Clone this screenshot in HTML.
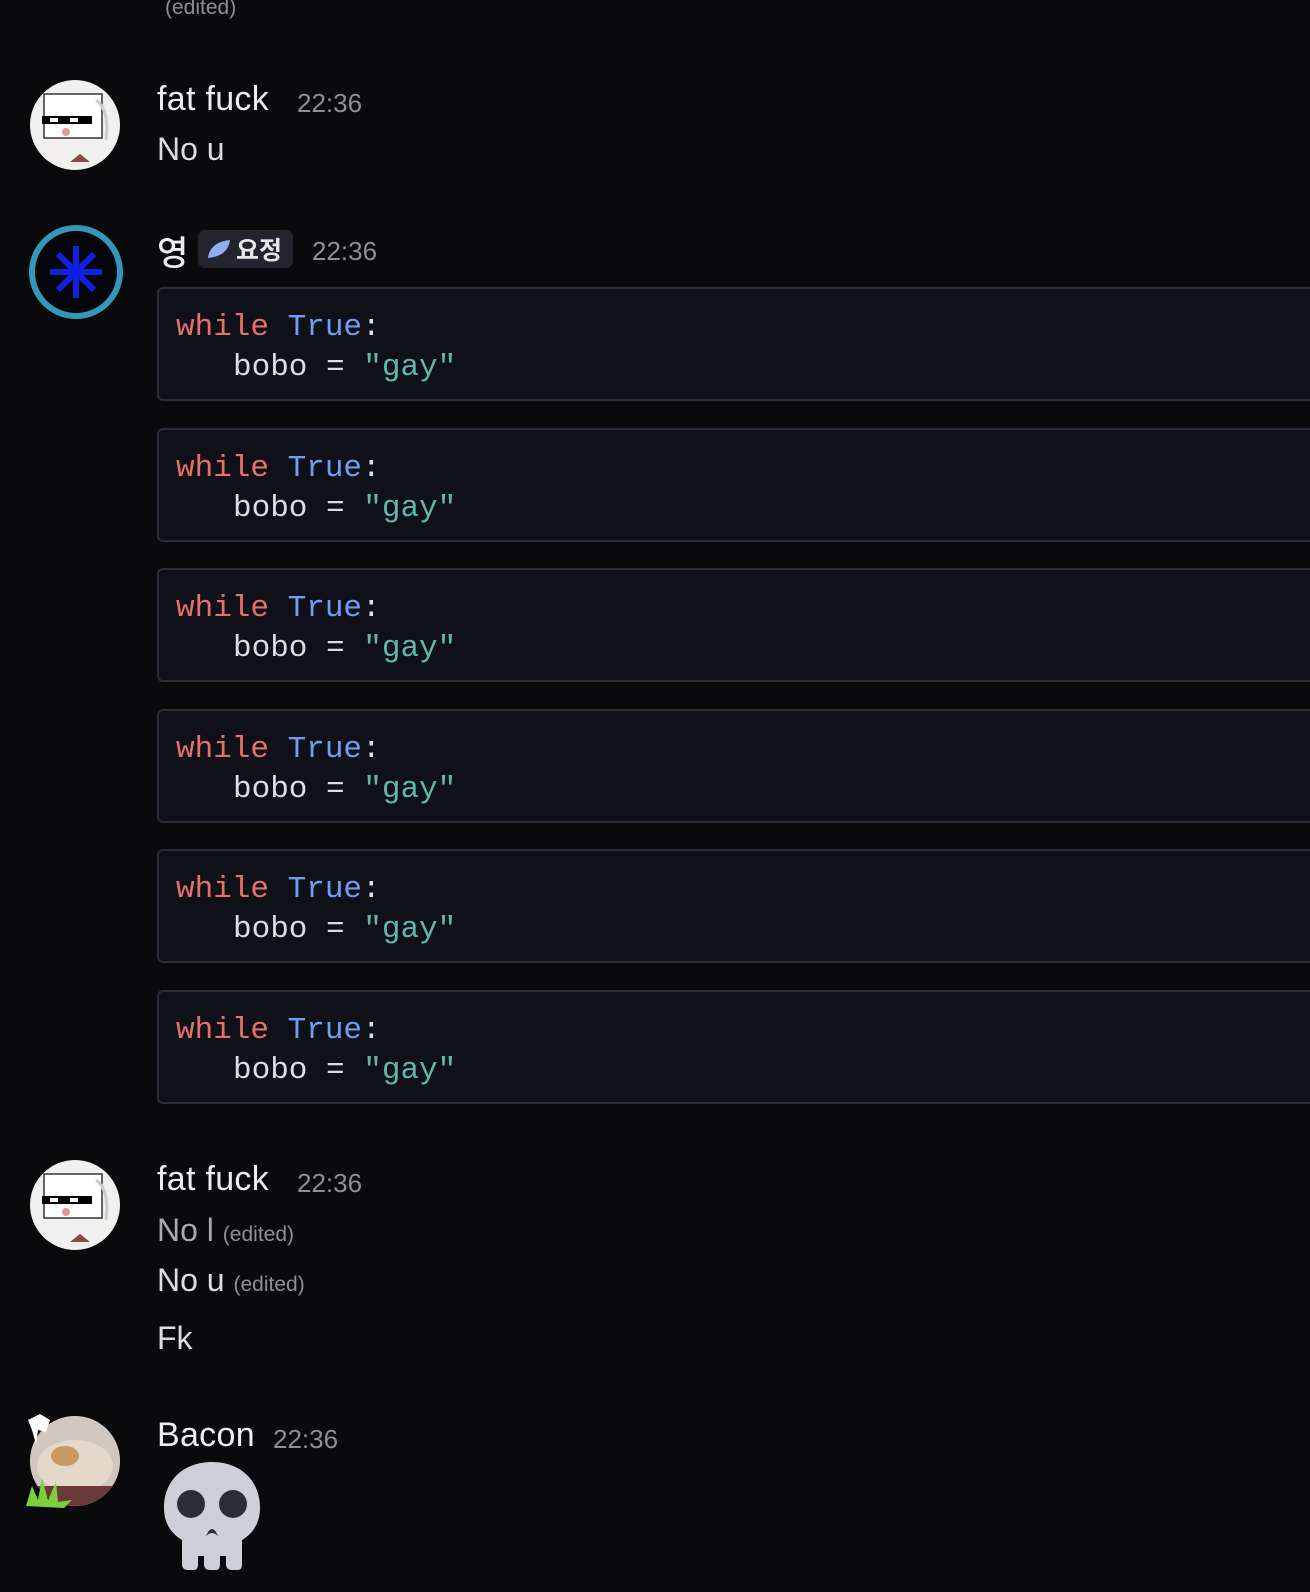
<!DOCTYPE html>
<html><head><meta charset="utf-8"><style>
body{margin:0;width:1310px;height:1592px;background:#0a0a0d;overflow:hidden;position:relative;font-family:"Liberation Sans","Noto Sans CJK KR",sans-serif;color:#dcdde0}
.a{position:absolute;white-space:nowrap}
.name{font-size:34px;color:#eeeef0;font-weight:500;letter-spacing:0.3px}
.ts{font-size:26px;color:#8e8f96}
.msg{font-size:32px;color:#dcdde0}
.ed{font-size:21px;color:#8e8f96}
.code{position:absolute;left:157px;width:1170px;height:114px;background:#0f1018;border:2px solid #2b2c35;border-radius:6px;box-sizing:border-box;font-family:"Liberation Mono",monospace;font-size:31px;color:#dcdde0}
.code .l1{position:absolute;left:17px;top:21px}
.code .l2{position:absolute;left:74px;top:61px}
.k{color:#e8706a}.t{color:#6f9ef0}.s{color:#5fb7ad}
.av{position:absolute;border-radius:50%;overflow:hidden}
</style></head><body>
<div class="a ed" style="left:165px;top:-4px">(edited)</div>

<div class="av" style="left:30px;top:80px;width:90px;height:90px;background:#f2f0ee">
<svg width="90" height="90"><rect x="14" y="14" width="58" height="44" fill="#fff" stroke="#333" stroke-width="1.5"/><rect x="12" y="36" width="50" height="8" fill="#000"/><rect x="20" y="38" width="8" height="4" fill="#fff"/><rect x="40" y="38" width="8" height="4" fill="#fff"/><circle cx="36" cy="52" r="4" fill="#d99"/><path d="M40 82 l10 -8 10 8z" fill="#8a4a48"/><path d="M66 20 q14 10 10 40" stroke="#ccc" fill="none" stroke-width="3"/></svg></div>
<div class="a name" style="left:157px;top:80px">fat fuck</div>
<div class="a ts" style="left:297px;top:88px">22:36</div>
<div class="a msg" style="left:157px;top:131px">No u</div>

<div class="av" style="left:24px;top:220px;width:104px;height:104px;border-radius:50%">
<svg width="104" height="104"><circle cx="52" cy="52" r="44" fill="none" stroke="#3ab0d8" stroke-width="6" opacity=".85"/><circle cx="52" cy="52" r="38" fill="#06060a"/><g stroke="#1020e0" stroke-width="6"><path d="M52 26v52M26 52h52M34 34l36 36M70 34l-36 36"/></g></svg></div>
<div class="a name" style="left:157px;top:226px">영</div>
<div class="a" style="left:198px;top:230px;width:95px;height:38px;background:#24252c;border-radius:7px"></div>
<svg class="a" style="left:206px;top:238px" width="26" height="22"><path d="M2 20 Q4 4 24 2 Q22 18 2 20z" fill="#8fb0f0"/></svg>
<div class="a" style="left:236px;top:231px;font-size:25px;font-weight:bold;color:#e8e8ea">요정</div>
<div class="a ts" style="left:312px;top:236px">22:36</div>

<div class="code" style="top:287px"><div class="l1"><span class="k">while</span> <span class="t">True</span>:</div><div class="l2">bobo = <span class="s">"gay"</span></div></div>
<div class="code" style="top:428px"><div class="l1"><span class="k">while</span> <span class="t">True</span>:</div><div class="l2">bobo = <span class="s">"gay"</span></div></div>
<div class="code" style="top:568px"><div class="l1"><span class="k">while</span> <span class="t">True</span>:</div><div class="l2">bobo = <span class="s">"gay"</span></div></div>
<div class="code" style="top:709px"><div class="l1"><span class="k">while</span> <span class="t">True</span>:</div><div class="l2">bobo = <span class="s">"gay"</span></div></div>
<div class="code" style="top:849px"><div class="l1"><span class="k">while</span> <span class="t">True</span>:</div><div class="l2">bobo = <span class="s">"gay"</span></div></div>
<div class="code" style="top:990px"><div class="l1"><span class="k">while</span> <span class="t">True</span>:</div><div class="l2">bobo = <span class="s">"gay"</span></div></div>

<div class="av" style="left:30px;top:1160px;width:90px;height:90px;background:#f2f0ee">
<svg width="90" height="90"><rect x="14" y="14" width="58" height="44" fill="#fff" stroke="#333" stroke-width="1.5"/><rect x="12" y="36" width="50" height="8" fill="#000"/><rect x="20" y="38" width="8" height="4" fill="#fff"/><rect x="40" y="38" width="8" height="4" fill="#fff"/><circle cx="36" cy="52" r="4" fill="#d99"/><path d="M40 82 l10 -8 10 8z" fill="#8a4a48"/><path d="M66 20 q14 10 10 40" stroke="#ccc" fill="none" stroke-width="3"/></svg></div>
<div class="a name" style="left:157px;top:1160px">fat fuck</div>
<div class="a ts" style="left:297px;top:1168px">22:36</div>
<div class="a msg" style="left:157px;top:1212px;color:#a9aab0">No l <span class="ed">(edited)</span></div>
<div class="a msg" style="left:157px;top:1262px">No u <span class="ed">(edited)</span></div>
<div class="a msg" style="left:157px;top:1320px">Fk</div>

<div class="av" style="left:30px;top:1416px;width:90px;height:90px;background:#b89a7a">
<svg width="90" height="90"><rect width="90" height="90" fill="#cfc7c0"/><ellipse cx="45" cy="50" rx="38" ry="26" fill="#e4d8cc"/><ellipse cx="35" cy="40" rx="14" ry="10" fill="#c89a60"/><rect y="70" width="90" height="20" fill="#6a3a3a"/></svg></div>
<svg class="a" style="left:24px;top:1470px" width="50" height="40"><path d="M2 36 L8 16 L14 30 L18 8 L24 30 L32 12 L34 32 L48 30 L40 38z" fill="#7ccf3a"/></svg>
<svg class="a" style="left:24px;top:1410px" width="30" height="36"><path d="M4 10 L16 4 L26 10 L22 22 L14 20 L12 34 L8 20z" fill="#fff"/></svg>
<div class="a name" style="left:157px;top:1416px">Bacon</div>
<div class="a ts" style="left:273px;top:1424px">22:36</div>
<svg class="a" style="left:162px;top:1460px" width="100" height="112" viewBox="0 0 100 112">
<path d="M50 2 C22 2 2 20 2 48 C2 64 10 74 20 80 L20 104 Q20 110 26 110 L32 110 Q36 110 36 104 L36 96 L42 96 L42 104 Q42 110 48 110 L54 110 Q58 110 58 104 L58 96 L64 96 L64 104 Q64 110 70 110 L76 110 Q80 110 80 104 L80 80 C90 74 98 64 98 48 C98 20 78 2 50 2z" fill="#ccd0d6"/>
<circle cx="29" cy="44" r="14" fill="#2a2d32"/><circle cx="71" cy="44" r="14" fill="#2a2d32"/>
<path d="M44 76 Q50 62 56 76 Q50 70 44 76z" fill="#2a2d32"/></svg>
</body></html>
